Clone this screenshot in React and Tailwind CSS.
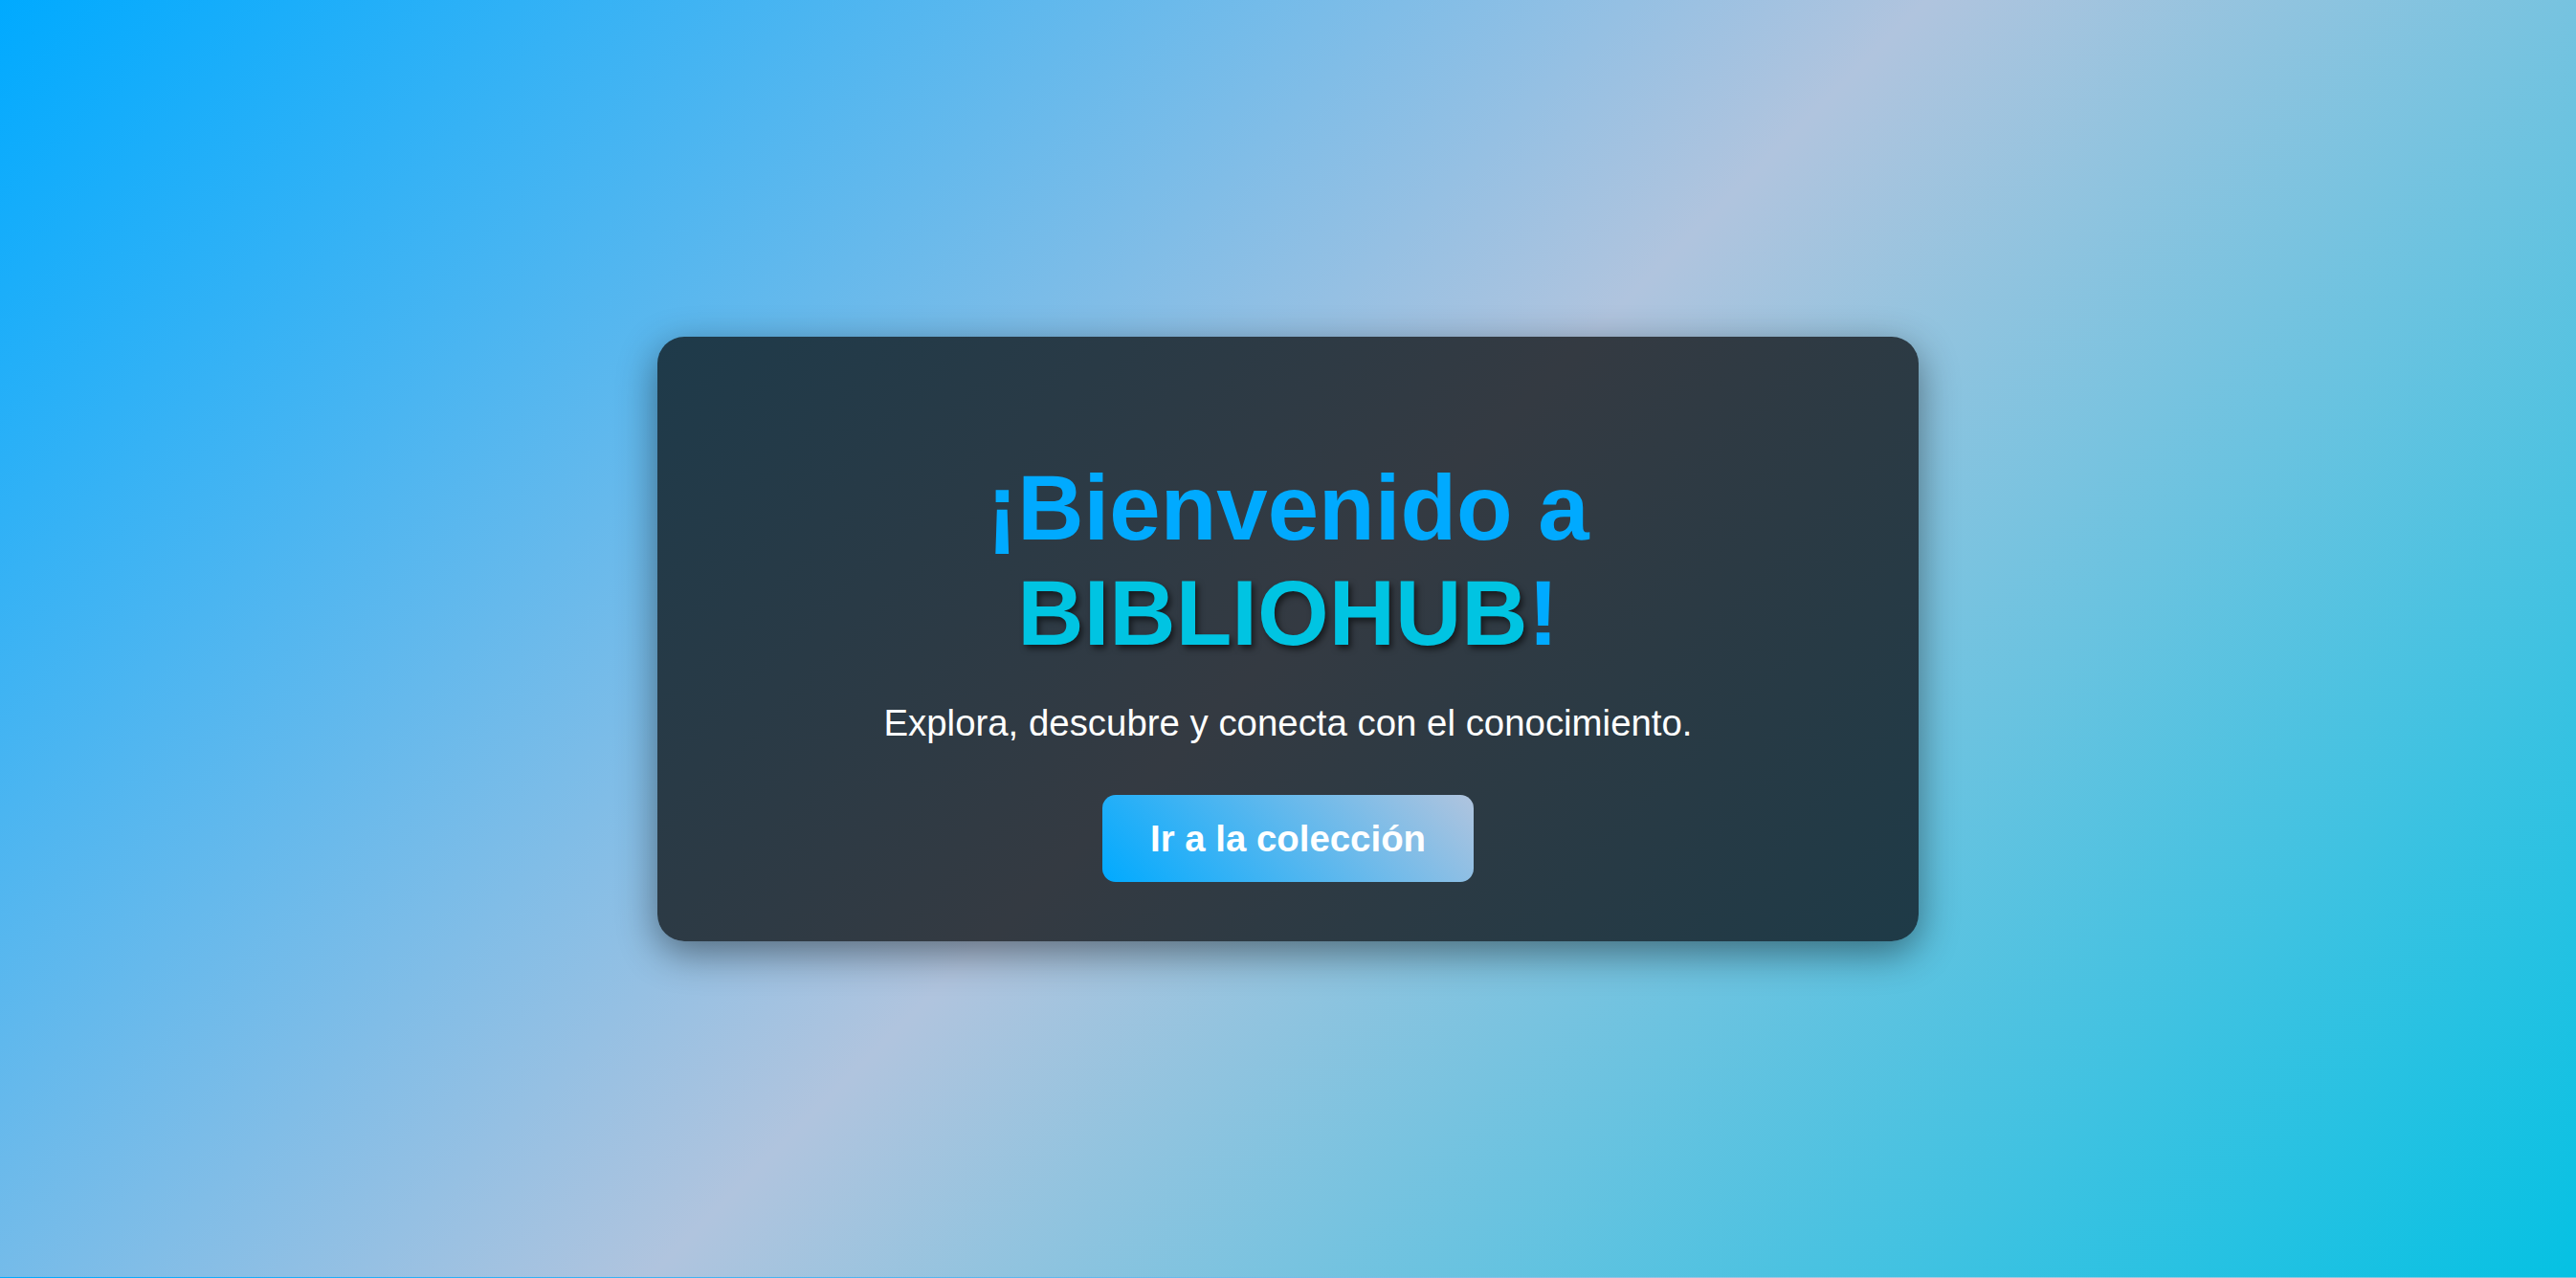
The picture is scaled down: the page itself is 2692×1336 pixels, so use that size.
import React from 'react';

const font = "font-['Liberation_Sans',Arial,Helvetica,sans-serif]";

function WelcomeCard() {
  return (
    <div className="w-[1318px] rounded-[28px] bg-[linear-gradient(135deg,#1e3a4a_0%,#343a42_50%,#1e3a47_100%)] px-[60px] pt-[124px] pb-[62px] text-center shadow-[0_12px_40px_rgba(0,0,0,0.45)]">
      <h1 className="text-[96px] font-bold leading-[110px] text-[#00aaff]">
        ¡Bienvenido a{' '}
        <span className="text-[#00c4e2] [text-shadow:3px_4px_6px_rgba(0,0,0,0.55)]">BIBLIOHUB</span>!
      </h1>
      <p className="mt-[38px] text-[38.4px] leading-[44px] text-white">
        Explora, descubre y conecta con el conocimiento.
      </p>
      <button
        type="button"
        className="mt-[53px] rounded-[14px] bg-[linear-gradient(45deg,#00aaff_0%,#b0c4de_100%)] px-[50px] py-[24px] text-[38.4px] font-bold leading-[43px] text-white"
      >
        Ir a la colección
      </button>
    </div>
  );
}

export default function App() {
  return (
    <div
      className={`${font} flex h-[1336px] w-full items-center justify-center bg-[linear-gradient(135deg,#00aaff_0%,#b0c4de_50%,#05c1e3_100%)] bg-[length:100%_1335px] bg-repeat`}
    >
      <WelcomeCard />
    </div>
  );
}
